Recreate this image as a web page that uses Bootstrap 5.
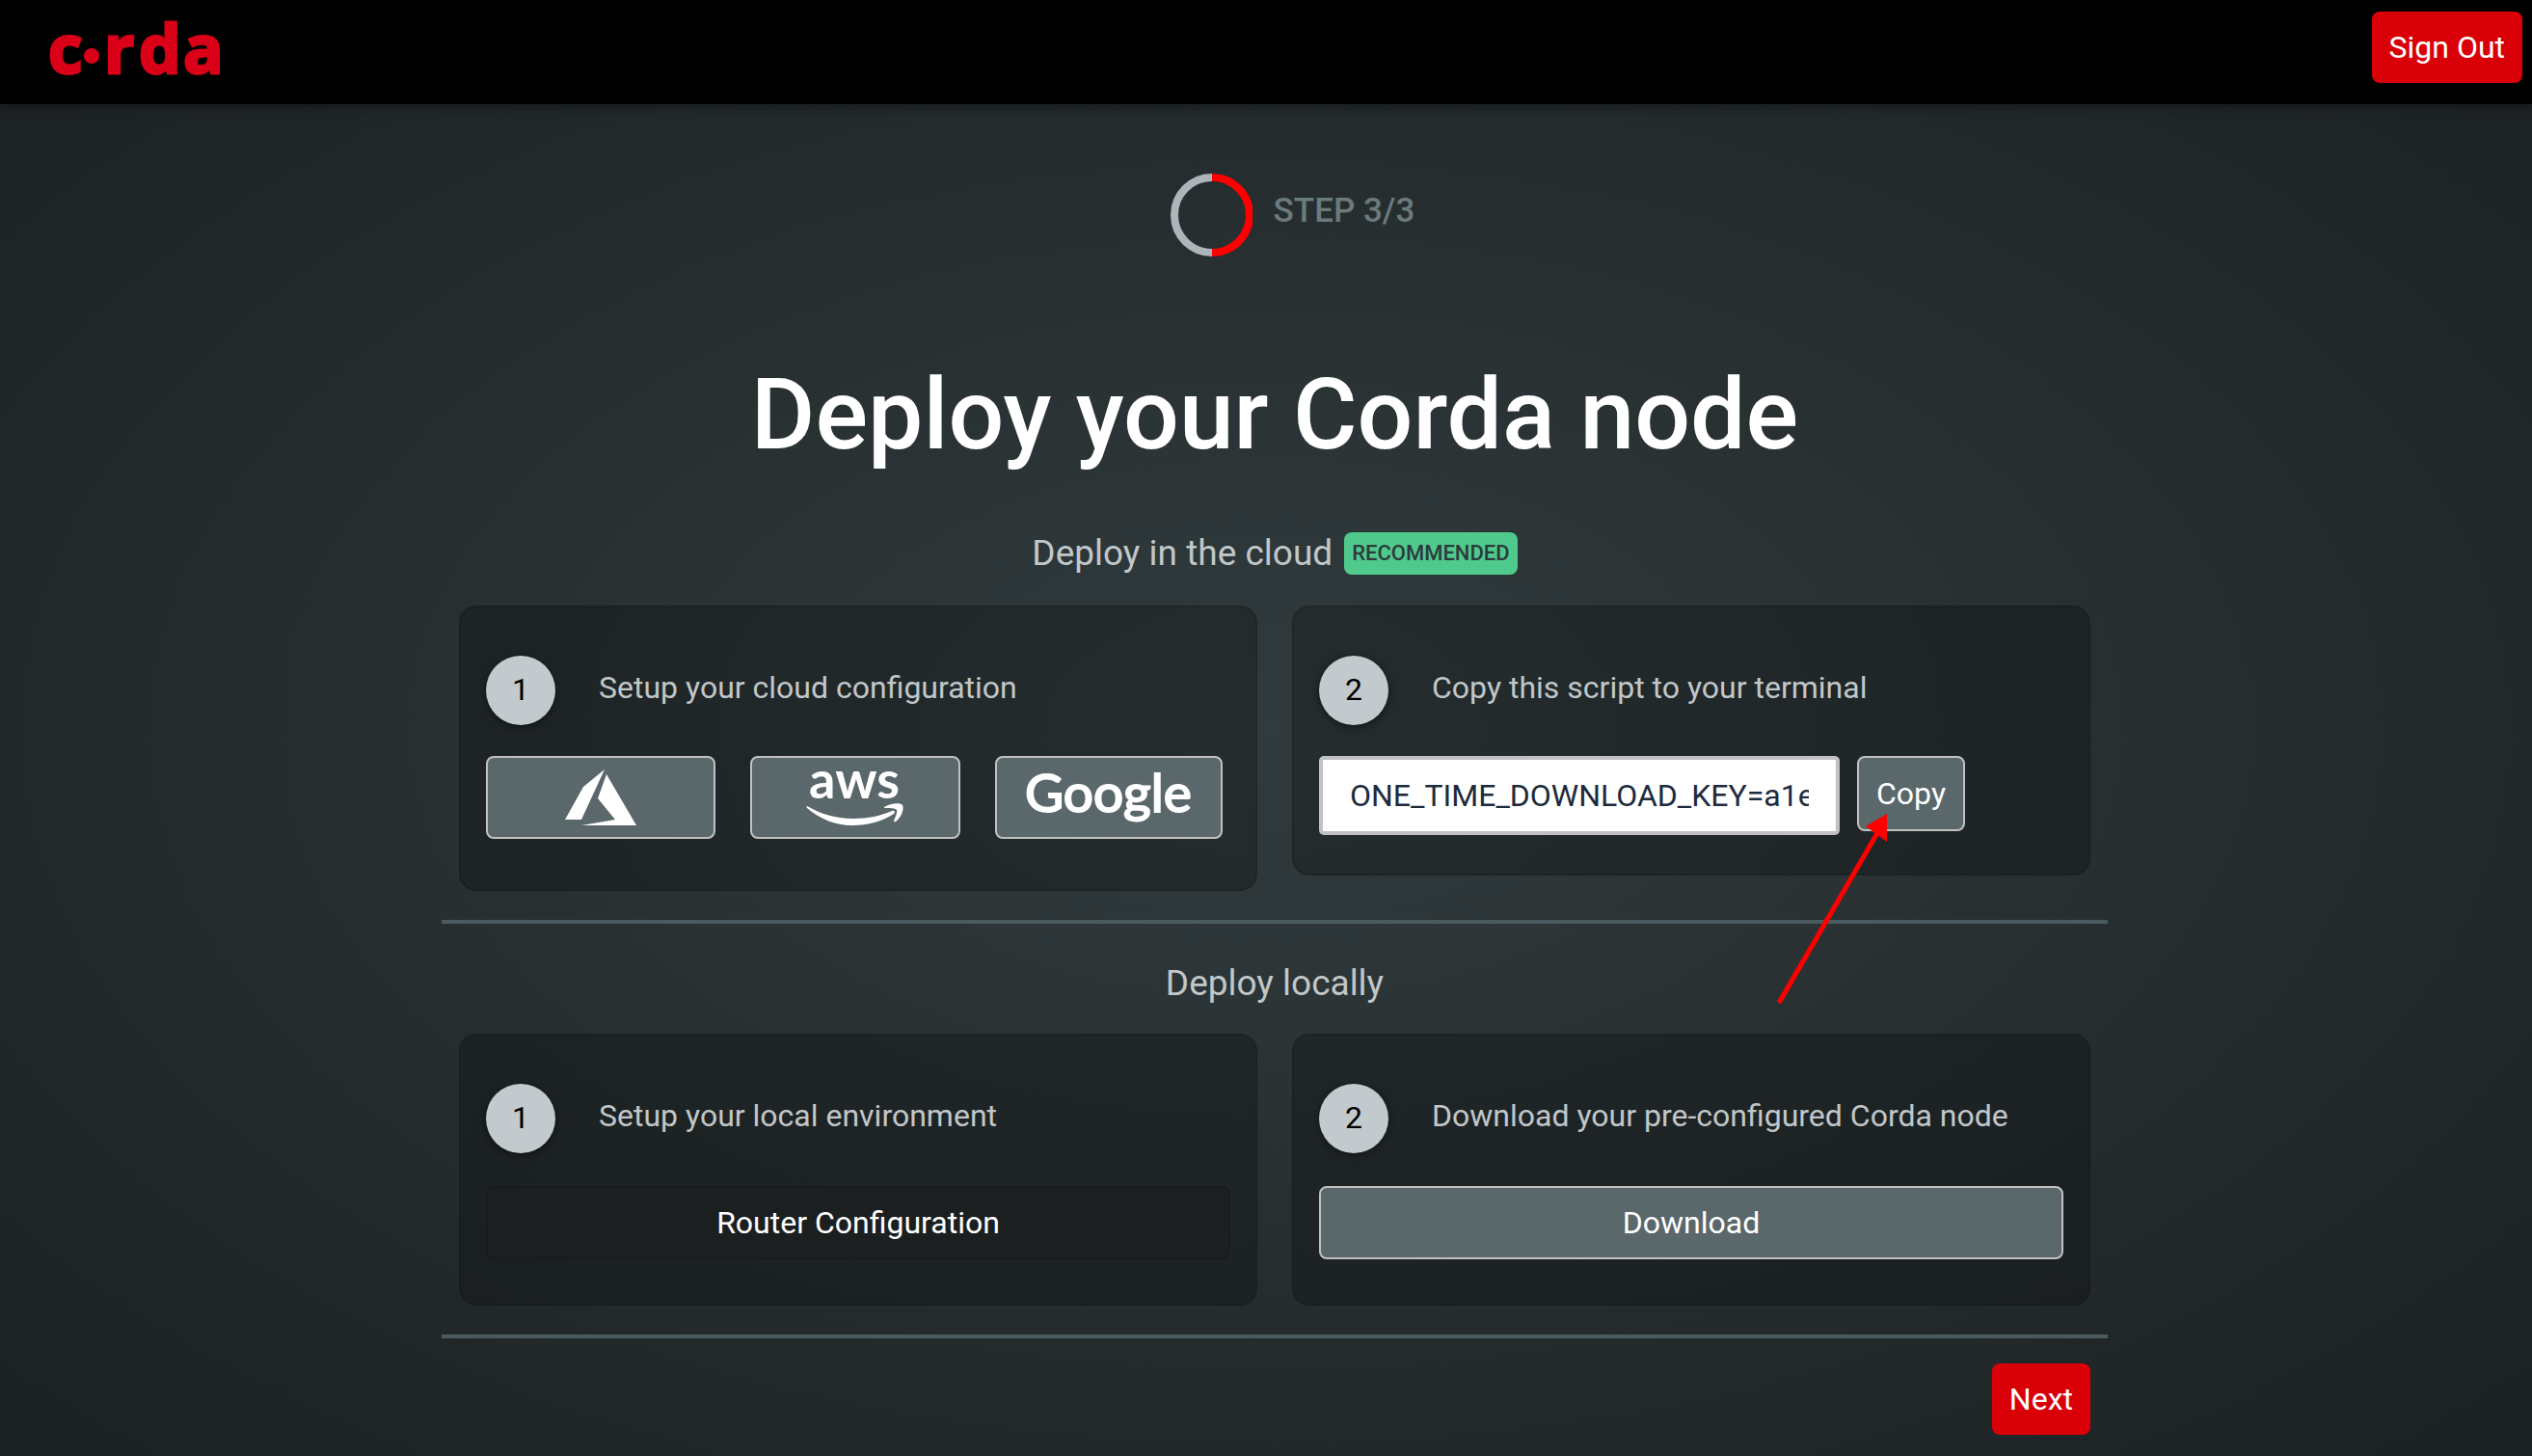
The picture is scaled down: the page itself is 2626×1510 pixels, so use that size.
<!DOCTYPE html>
<html lang="en">
<head>
<meta charset="utf-8">
<meta name="viewport" content="width=device-width, initial-scale=1">
<title>Deploy your Corda node</title>
<link href="https://cdn.jsdelivr.net/npm/bootstrap@5.3.0/dist/css/bootstrap.min.css" rel="stylesheet">
<style>
  body { font-family: Roboto, "Liberation Sans", sans-serif; font-size: 32px; line-height: 40px; color: #c1c7c9; min-height: 100vh;
    background: radial-gradient(ellipse farthest-corner at 50% 50%, #313b3d 0%, #1c2123 100%) #1c2123; }
  .topbar { background: #000; padding: 0 10px 0 44px; box-shadow: 0 2px 12px rgba(0,0,0,.45); }
  .brand svg { display: block; }
  .btn { font-size: 32px; line-height: 38px; border-radius: 8px; color: #fff; }
  .btn-brand { background: #d90008; border: 0; padding: 18px; }
  .btn-brand:hover { background: #b80007; color: #fff; }
  .btn-signout { margin-top: 12px; }
  .btn-slate { background: #5a676b; border: 2px solid #c1c1c1; padding: 18px; }
  .btn-slate:hover { background: #6a777b; color: #fff; }
  .btn-night { background: #1b1f20; border: 2px solid #191c1d; }
  .btn-night:hover { background: #24292a; color: #fff; }
  .btn-cloud { padding: 0; }
  .btn-cloud svg { display: block; overflow: visible; }
  main { padding-left: 18px; }
  .page { max-width: 1728px; }
  .stepper { font-size: 35px; font-weight: 500; color: #6b7a7c; padding: 72px 0 0 36px; gap: 22px; }
  .stepper span { padding-bottom: 8px; }
  .headline { font-size: 102px; line-height: 120px; font-weight: 500; color: #fff; margin: 104px 0 62px; }
  .section-title { font-size: 37px; line-height: 44px; font-weight: 400; margin: 0; }
  .title-row { gap: 12px; margin-bottom: 32px; }
  .title-row.local { margin: 40px 0 30px; }
  .tag { font-size: 22px; line-height: 44px; font-weight: 500; padding: 0 8px; border-radius: 8px; background: #4fca8c; color: #2b3b3b; }
  .panels { --bs-gutter-x: 36px; }
  .panel { background: rgba(0,0,0,.23); border: 2px solid rgba(0,0,0,.1); border-radius: 18px; padding: 50px 26px 40px; }
  .step-head { gap: 45px; }
  .step-head p, .step-head label { padding-bottom: 6px; }
  .num { width: 72px; height: 72px; padding-bottom: 2px; border-radius: 50%; background: #c3cacd; color: #000; box-shadow: 0 2px 8px rgba(0,0,0,.5); }
  .clouds { gap: 36px; margin: 32px 0 12px; }
  .script-row { gap: 18px; margin-top: 32px; }
  .wide-row { margin: 34px 0 6px; }
  .wide-row .btn { padding: 17px; }
  .divider { height: 4px; background: #4a5b5f; opacity: 1; border: 0; margin: 30px 0 0; }
  .script-box { width: 540px; height: 82px; border: 4px solid #c1c1c1; border-radius: 5px; padding: 0 28px; font-size: 32px; color: #1d2b3d; background: #fff; }
  .arrow { position: absolute; left: -86px; top: 56px; pointer-events: none; }
  .footer-row { padding: 26px 18px 20px; }
</style>
</head>
<body>
<header class="topbar d-flex justify-content-between align-items-start">
  <a class="brand" href="#" aria-label="corda">
    <svg width="200" height="108" viewBox="0 0 200 108" fill="#d90018" font-family="Open Sans, sans-serif" font-weight="700" font-size="69">
      <g stroke="#d90018" stroke-width="3"><text x="6" y="76">c</text><text x="64 100 146" y="76">rda</text></g><circle cx="51" cy="58" r="8"/>
    </svg>
  </a>
  <button class="btn btn-brand btn-signout" type="button">Sign Out</button>
</header>
<main>
  <div class="page mx-auto">
    <div class="stepper d-flex justify-content-center align-items-center">
      <svg width="86" height="86" viewBox="0 0 86 86" fill="none"><path d="M44 4a39 39 0 1 0 0 78" stroke="#adb5ba" stroke-width="8"/><path d="M44 4a39 39 0 0 1 0 78" stroke="#f00" stroke-width="8"/></svg>
      <span>STEP 3/3</span>
    </div>
    <h1 class="headline text-center">Deploy your Corda node</h1>

    <div class="title-row d-flex justify-content-center align-items-center">
      <h2 class="section-title">Deploy in the cloud</h2><span class="tag">RECOMMENDED</span>
    </div>
    <div class="row panels m-0 align-items-start">
      <div class="col-6">
        <section class="panel">
          <div class="step-head d-flex align-items-center">
            <div class="num d-flex justify-content-center align-items-center">1</div>
            <p class="m-0">Setup your cloud configuration</p>
          </div>
          <div class="clouds d-flex">
            <button class="btn btn-slate btn-cloud" type="button" aria-label="Azure">
              <svg width="234" height="82" viewBox="0 0 234 82" fill="#fff"><path d="M121 12 99 30 80 64h17z"/><path d="M123 17 114 42l18 22-35 6h57z"/></svg>
            </button>
            <button class="btn btn-slate btn-cloud" type="button" aria-label="AWS">
              <svg width="214" height="82" viewBox="0 0 214 82" fill="#fff"><text x="59" y="42" font-family="Lato, sans-serif" font-weight="700" font-size="54">aws</text>
                <path d="M57 50c14 8 30 13 48 13 15 0 29-3 40-8 3-1 4 2 2 3-12 8-27 12-43 12-18 0-34-7-47-18-1-1 0-3 0-2z"/><path d="M137 51c6-4 17-5 19-2 2 3-1 13-7 17-1 1-2 0-2-1 2-4 4-10 3-11-2-2-7-2-13-2z"/></svg>
            </button>
            <button class="btn btn-slate btn-cloud" type="button" aria-label="Google">
              <svg width="232" height="82" viewBox="0 0 232 82" fill="#fff"><text x="29" y="56" font-family="Lato, sans-serif" font-weight="400" font-size="55" stroke="#fff" stroke-width="2">Google</text></svg>
            </button>
          </div>
        </section>
      </div>
      <div class="col-6">
        <section class="panel">
          <div class="step-head d-flex align-items-center">
            <div class="num d-flex justify-content-center align-items-center">2</div>
            <label for="script">Copy this script to your terminal</label>
          </div>
          <div class="script-row d-flex align-items-start">
            <input class="script-box" id="script" type="text" readonly value="ONE_TIME_DOWNLOAD_KEY=a1e">
            <div class="position-relative">
              <button class="btn btn-slate" type="button">Copy</button>
              <svg class="arrow" width="120" height="204" viewBox="0 0 120 204"><path d="M5 200 107 24" stroke="#f00" stroke-width="5"/><path d="M117 4 95 17l22 16z" fill="#f00"/></svg>
            </div>
          </div>
        </section>
      </div>
    </div>
    <hr class="divider">

    <div class="title-row local d-flex justify-content-center">
      <h2 class="section-title">Deploy locally</h2>
    </div>
    <div class="row panels m-0 align-items-start">
      <div class="col-6">
        <section class="panel">
          <div class="step-head d-flex align-items-center">
            <div class="num d-flex justify-content-center align-items-center">1</div>
            <p class="m-0">Setup your local environment</p>
          </div>
          <div class="wide-row d-grid"><button class="btn btn-night" type="button">Router Configuration</button></div>
        </section>
      </div>
      <div class="col-6">
        <section class="panel">
          <div class="step-head d-flex align-items-center">
            <div class="num d-flex justify-content-center align-items-center">2</div>
            <p class="m-0">Download your pre-configured Corda node</p>
          </div>
          <div class="wide-row d-grid"><button class="btn btn-slate" type="button">Download</button></div>
        </section>
      </div>
    </div>
    <hr class="divider">
    <div class="footer-row d-flex justify-content-end">
      <button class="btn btn-brand" type="button">Next</button>
    </div>
  </div>
</main>
<script src="https://cdn.jsdelivr.net/npm/bootstrap@5.3.0/dist/js/bootstrap.bundle.min.js"></script>
</body>
</html>
